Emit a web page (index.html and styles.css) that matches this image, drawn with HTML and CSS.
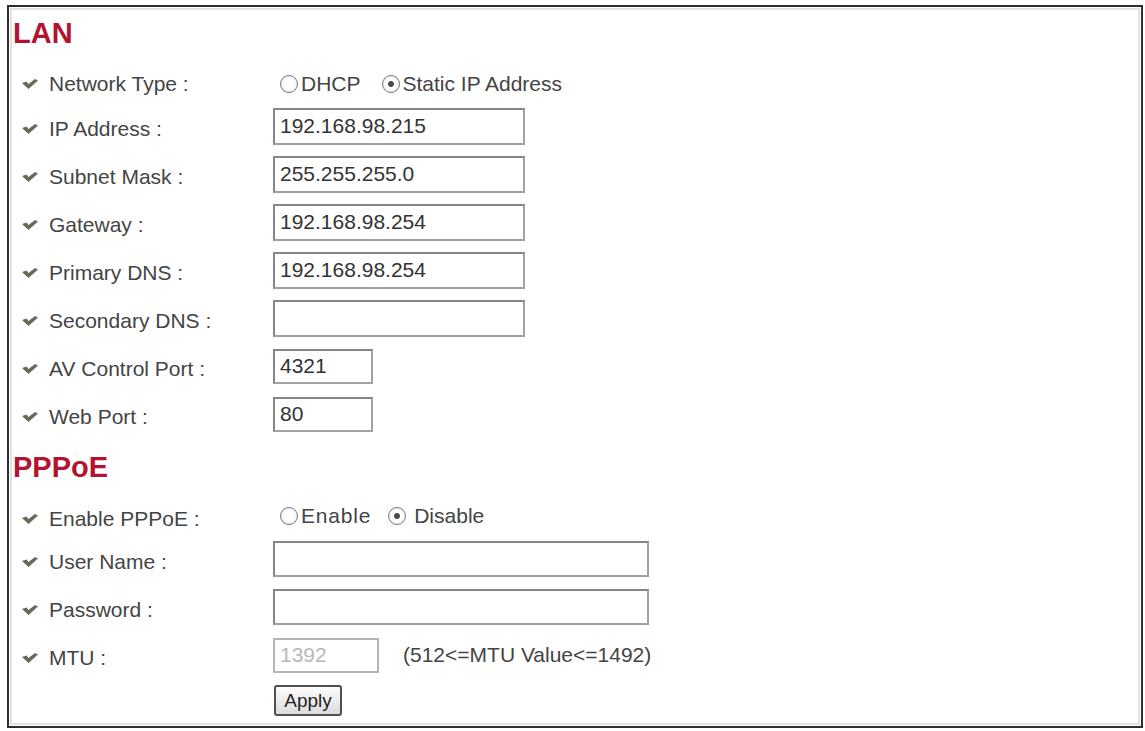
FILE: index.html
```html
<!DOCTYPE html>
<html lang="en">
<head>
  <meta charset="UTF-8">
  <title>Network Setting</title>
  <link rel="stylesheet" href="styles.css">
</head>

<body>
  <div class="panel">
    <h2 class="section-title">LAN</h2>

    <div class="row row-radio">
      <div class="label"><svg class="bullet" viewBox="0 0 16 10"><polygon points="0,4 4.5,2.5 6.5,5 13,0 16,1.5 6.5,10"/></svg>Network Type :</div>
      <div class="field">
        <label class="choice"><input type="radio" name="nettype"> DHCP</label>
        <label class="choice"><input type="radio" name="nettype" checked> Static IP Address</label>
      </div>
    </div>

    <div class="row">
      <div class="label"><svg class="bullet" viewBox="0 0 16 10"><polygon points="0,4 4.5,2.5 6.5,5 13,0 16,1.5 6.5,10"/></svg>IP Address :</div>
      <div class="field"><input type="text" class="text-box wide" value="192.168.98.215"></div>
    </div>

    <div class="row">
      <div class="label"><svg class="bullet" viewBox="0 0 16 10"><polygon points="0,4 4.5,2.5 6.5,5 13,0 16,1.5 6.5,10"/></svg>Subnet Mask :</div>
      <div class="field"><input type="text" class="text-box wide" value="255.255.255.0"></div>
    </div>

    <div class="row">
      <div class="label"><svg class="bullet" viewBox="0 0 16 10"><polygon points="0,4 4.5,2.5 6.5,5 13,0 16,1.5 6.5,10"/></svg>Gateway :</div>
      <div class="field"><input type="text" class="text-box wide" value="192.168.98.254"></div>
    </div>

    <div class="row">
      <div class="label"><svg class="bullet" viewBox="0 0 16 10"><polygon points="0,4 4.5,2.5 6.5,5 13,0 16,1.5 6.5,10"/></svg>Primary DNS :</div>
      <div class="field"><input type="text" class="text-box wide" value="192.168.98.254"></div>
    </div>

    <div class="row">
      <div class="label"><svg class="bullet" viewBox="0 0 16 10"><polygon points="0,4 4.5,2.5 6.5,5 13,0 16,1.5 6.5,10"/></svg>Secondary DNS :</div>
      <div class="field"><input type="text" class="text-box wide" value=""></div>
    </div>

    <div class="row">
      <div class="label"><svg class="bullet" viewBox="0 0 16 10"><polygon points="0,4 4.5,2.5 6.5,5 13,0 16,1.5 6.5,10"/></svg>AV Control Port :</div>
      <div class="field"><input type="text" class="text-box short" value="4321"></div>
    </div>

    <div class="row">
      <div class="label"><svg class="bullet" viewBox="0 0 16 10"><polygon points="0,4 4.5,2.5 6.5,5 13,0 16,1.5 6.5,10"/></svg>Web Port :</div>
      <div class="field"><input type="text" class="text-box short" value="80"></div>
    </div>

    <h2 class="section-title pppoe">PPPoE</h2>

    <div class="row row-enable">
      <div class="label"><svg class="bullet" viewBox="0 0 16 10"><polygon points="0,4 4.5,2.5 6.5,5 13,0 16,1.5 6.5,10"/></svg>Enable PPPoE :</div>
      <div class="field">
        <label class="choice enable"><input type="radio" name="pppoe"> Enable</label>
        <label class="choice disable"><input type="radio" name="pppoe" checked> Disable</label>
      </div>
    </div>

    <div class="row">
      <div class="label"><svg class="bullet" viewBox="0 0 16 10"><polygon points="0,4 4.5,2.5 6.5,5 13,0 16,1.5 6.5,10"/></svg>User Name :</div>
      <div class="field"><input type="text" class="text-box long" value=""></div>
    </div>

    <div class="row">
      <div class="label"><svg class="bullet" viewBox="0 0 16 10"><polygon points="0,4 4.5,2.5 6.5,5 13,0 16,1.5 6.5,10"/></svg>Password :</div>
      <div class="field"><input type="password" class="text-box long" value=""></div>
    </div>

    <div class="row">
      <div class="label"><svg class="bullet" viewBox="0 0 16 10"><polygon points="0,4 4.5,2.5 6.5,5 13,0 16,1.5 6.5,10"/></svg>MTU :</div>
      <div class="field">
        <input type="text" class="text-box mtu" value="1392" disabled>
        <span class="note">(512&lt;=MTU Value&lt;=1492)</span>
      </div>
    </div>

    <div class="row row-apply">
      <div class="label"></div>
      <div class="field"><button class="apply">Apply</button></div>
    </div>
  </div>
</body>
</html>
```

FILE: styles.css
```css
body {
  margin: 0;
  background: #fff;
  font-family: "Liberation Sans", Arial, sans-serif;
}

.panel {
  box-sizing: border-box;
  width: 1136px;
  height: 723px;
  margin: 5px 0 0 7px;
  padding-left: 4px;
  border: 2px solid #2e2e2e;
  box-shadow: inset 0 0 0 1px #fff, inset 0 0 0 3px #e2e2e2;
  background: #fff;
}

.section-title {
  margin: 0;
  height: 53px;
  line-height: 53px;
  font-size: 29px;
  font-weight: bold;
  color: #b3132f;
}

.section-title.pppoe {
  height: 58px;
  line-height: 58px;
}

.row {
  display: flex;
  align-items: center;
  height: 48px;
}

.row-radio {
  height: 42px;
}

.row-radio .field {
  padding-top: 6px;
}

.row-enable {
  height: 39px;
}

.row-apply {
  align-items: flex-start;
  height: auto;
  padding-top: 6px;
}

.label {
  box-sizing: border-box;
  width: 260px;
  flex: none;
  display: flex;
  align-items: center;
  gap: 11px;
  padding: 6px 0 0 9px;
  font-size: 21px;
  color: #444;
}

.bullet {
  width: 16px;
  height: 10px;
  fill: #646c5a;
}

.field {
  display: flex;
  align-items: center;
}

.choice {
  display: flex;
  align-items: center;
  margin-left: 7px;
  margin-right: 14px;
  font-size: 21px;
  color: #444;
}

.choice.enable {
  margin-right: 10px;
  letter-spacing: 0.8px;
}

.choice.disable input {
  margin-right: 8px;
}

.choice input {
  appearance: none;
  -webkit-appearance: none;
  box-sizing: border-box;
  width: 18px;
  height: 18px;
  margin: 0 3px 0 0;
  border: 1.5px solid #7a7a7a;
  border-radius: 50%;
  background: radial-gradient(circle, #fff 40%, #e2e2e2 100%);
}

.choice input:checked {
  background: radial-gradient(circle, #4a4a4a 0, #4a4a4a 2.5px, #fff 3.5px, #fff 45%, #dcdcdc 100%);
}

.text-box {
  box-sizing: border-box;
  height: 37px;
  padding: 0 5px;
  border: 2px solid #a2a2a2;
  border-top-color: #858585;
  border-left-color: #858585;
  font-family: "Liberation Sans", Arial, sans-serif;
  font-size: 21px;
  color: #333;
  background: #fff;
}

.text-box.wide {
  width: 252px;
}

.text-box.short {
  width: 100px;
  height: 35px;
}

.text-box.long {
  width: 376px;
  height: 36px;
}

.text-box.mtu {
  width: 106px;
  height: 35px;
  color: #b8b8b8;
  border-color: #b4b4b4;
}

.note {
  margin-left: 24px;
  font-size: 21px;
  color: #444;
}

.apply {
  box-sizing: border-box;
  width: 68px;
  height: 31px;
  margin-left: 1px;
  padding: 0;
  border: 2px solid #505050;
  border-radius: 3px;
  background: linear-gradient(#fdfdfd, #dcdcdc);
  font-family: "Liberation Sans", Arial, sans-serif;
  font-size: 19px;
  color: #222;
}
```
